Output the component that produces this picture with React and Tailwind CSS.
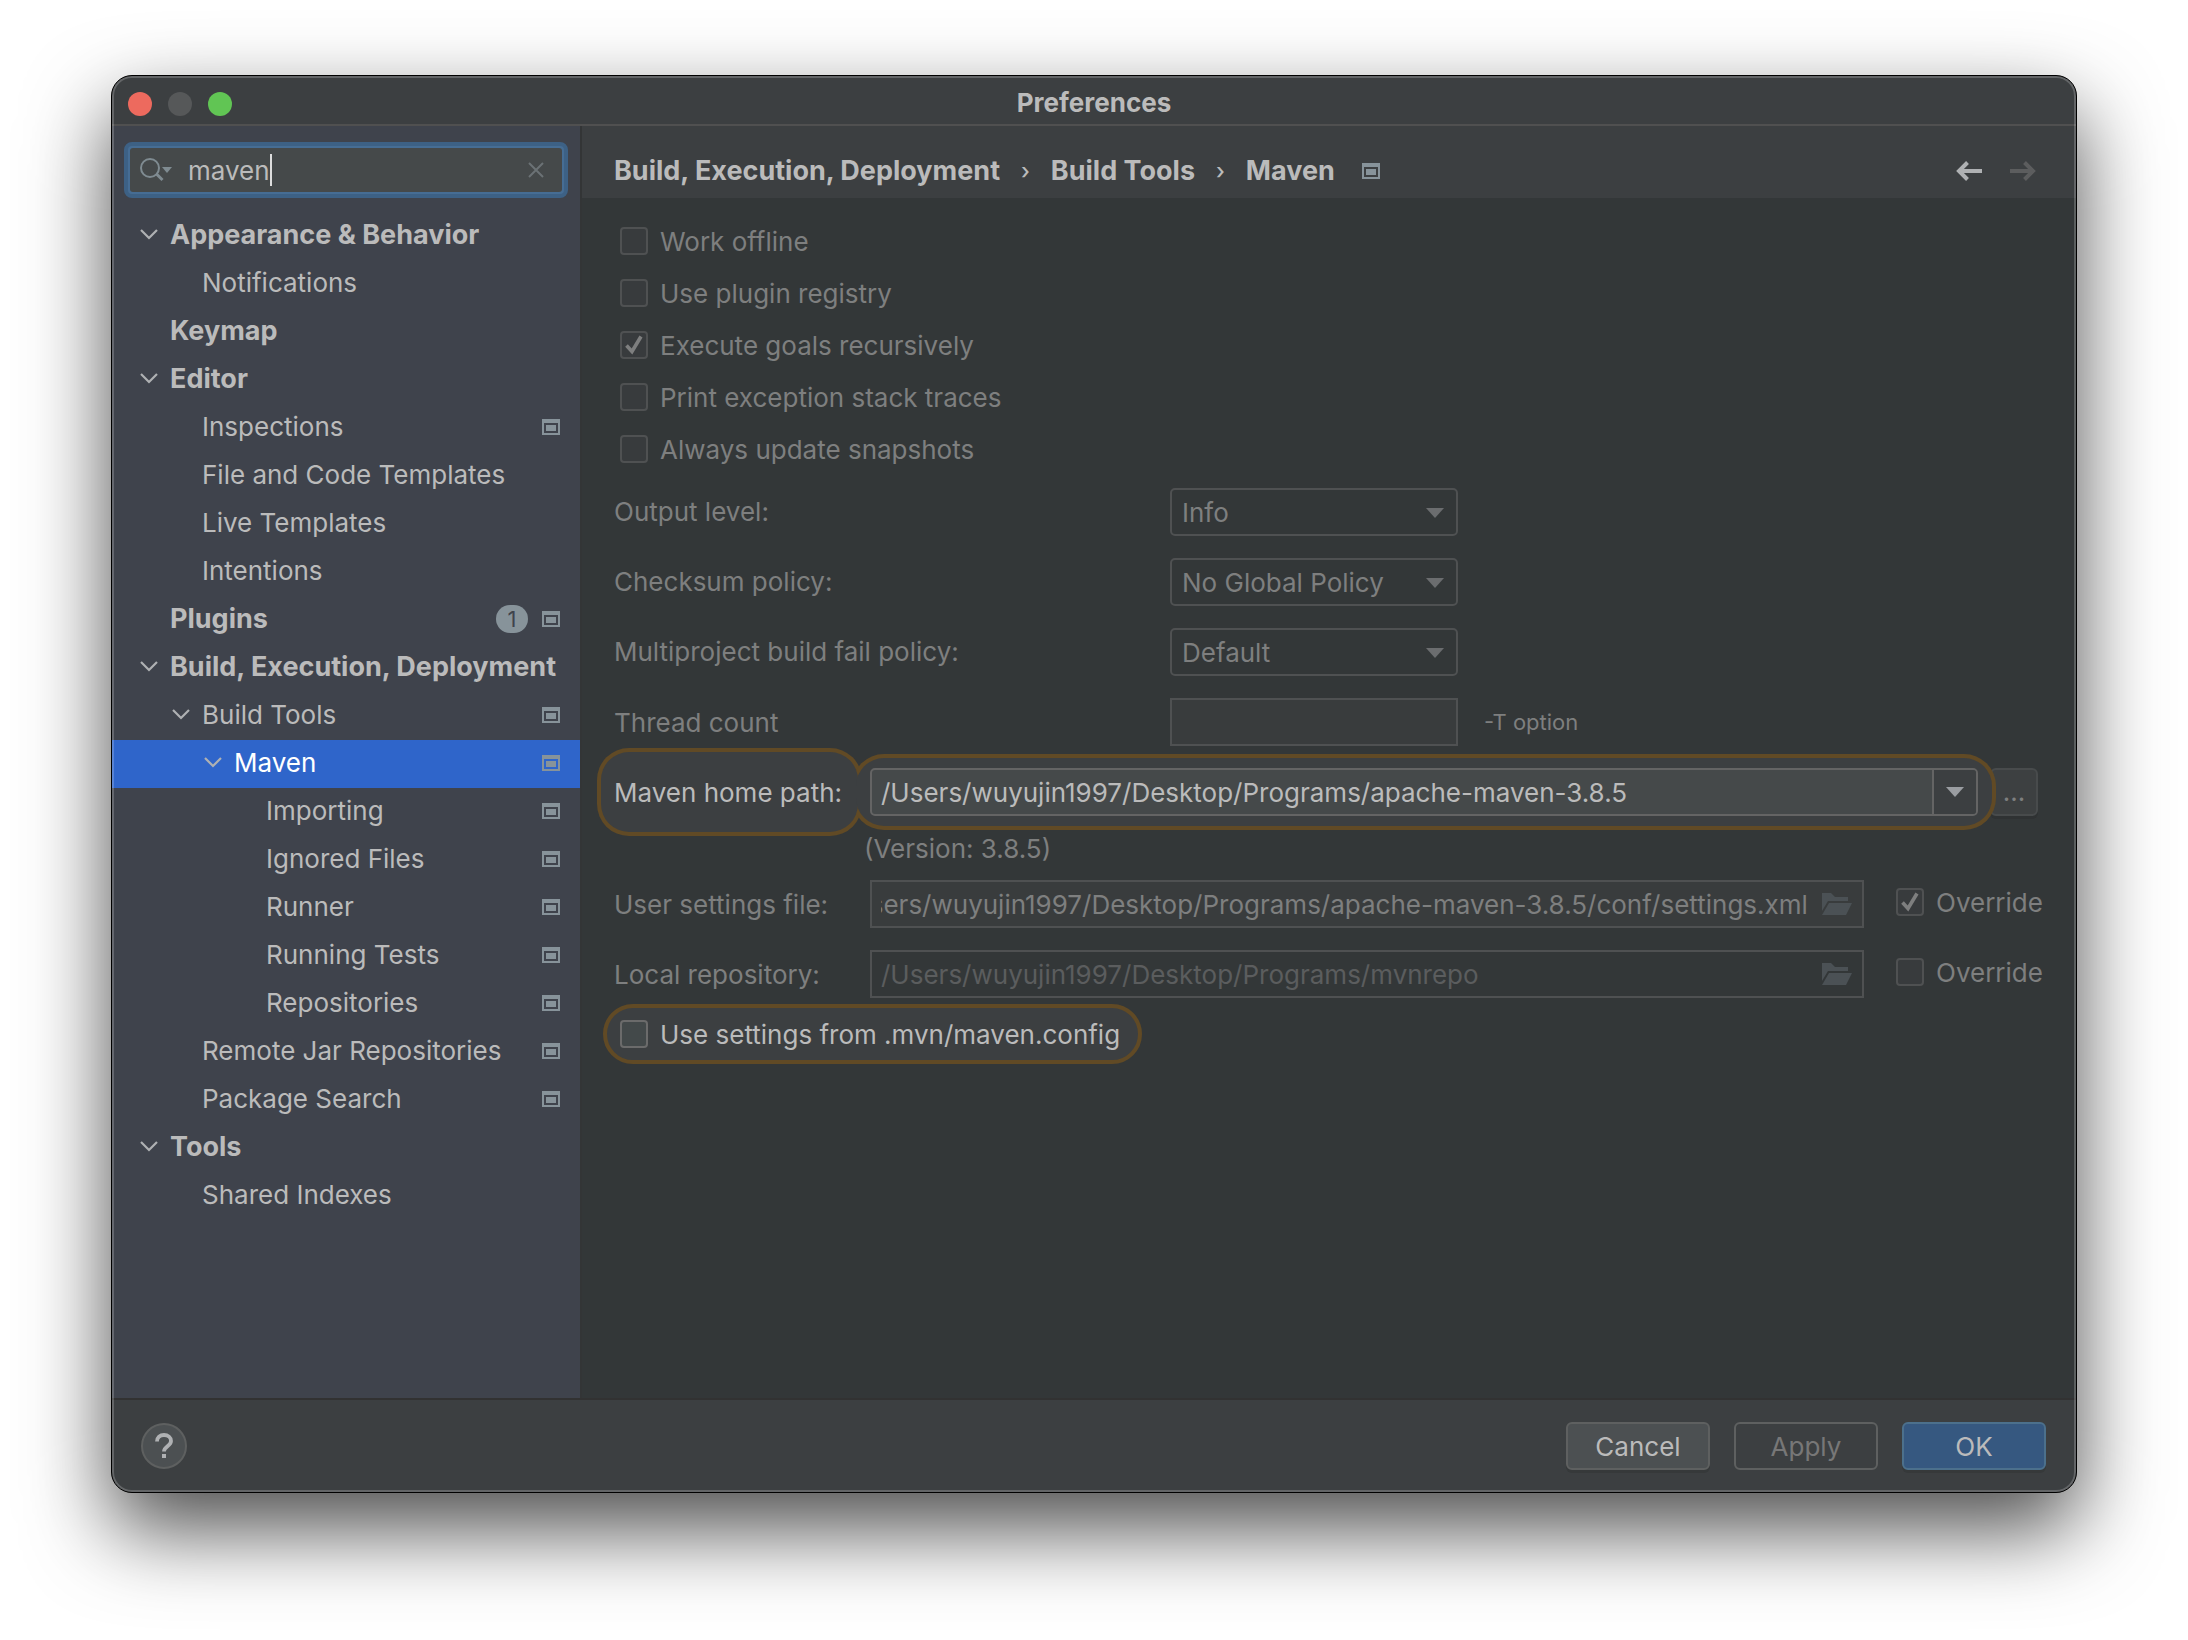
import { useEffect, useRef } from "react";

const TREE = [
  { label: "Appearance & Behavior", level: 0, bold: true, open: true },
  { label: "Notifications", level: 1 },
  { label: "Keymap", level: 0, bold: true },
  { label: "Editor", level: 0, bold: true, open: true },
  { label: "Inspections", level: 1, project: true },
  { label: "File and Code Templates", level: 1 },
  { label: "Live Templates", level: 1 },
  { label: "Intentions", level: 1 },
  { label: "Plugins", level: 0, bold: true, badge: 1, project: true },
  { label: "Build, Execution, Deployment", level: 0, bold: true, open: true },
  { label: "Build Tools", level: 1, open: true, project: true },
  { label: "Maven", level: 2, open: true, project: true, selected: true },
  { label: "Importing", level: 3, project: true },
  { label: "Ignored Files", level: 3, project: true },
  { label: "Runner", level: 3, project: true },
  { label: "Running Tests", level: 3, project: true },
  { label: "Repositories", level: 3, project: true },
  { label: "Remote Jar Repositories", level: 1, project: true },
  { label: "Package Search", level: 1, project: true },
  { label: "Tools", level: 0, bold: true, open: true },
  { label: "Shared Indexes", level: 1 },
];

const INDENT = ["pl-[26px]", "pl-[58px]", "pl-[90px]", "pl-[122px]"];

const OPTIONS = [
  { id: "offline", label: "Work offline" },
  { id: "registry", label: "Use plugin registry" },
  { id: "recursive", label: "Execute goals recursively", checked: true },
  { id: "traces", label: "Print exception stack traces" },
  { id: "snapshots", label: "Always update snapshots" },
];

const SELECTS = [
  { id: "output", label: "Output level:", value: "Info" },
  { id: "checksum", label: "Checksum policy:", value: "No Global Policy" },
  { id: "fail", label: "Multiproject build fail policy:", value: "Default" },
];

function ProjectIcon() {
  return (
    <svg width="18" height="16" viewBox="0 0 18 16" className="shrink-0" fill="#87939a">
      <path fillRule="evenodd" d="M0 0h18v16H0zM2 4v10h14V4z" />
      <path d="M4 6h10v6H4z" />
    </svg>
  );
}

function Chevron() {
  return (
    <svg width="22" height="14" viewBox="0 0 22 14" fill="none" stroke="#afb1b3" strokeWidth="2.2">
      <path d="M3 2l8 8 8-8" />
    </svg>
  );
}

function Triangle({ className }) {
  return (
    <svg width="18" height="10" viewBox="0 0 18 10" fill="currentColor" className={className}>
      <path d="M0 0h18L9 10z" />
    </svg>
  );
}

function FolderIcon() {
  return (
    <svg width="30" height="22" viewBox="0 0 30 22" className="shrink-0" fill="#4b5155">
      <path d="M0 0h9l4 4h13v4H6L0 18z" />
      <path d="M7 10h23l-6 12H0z" />
    </svg>
  );
}

function Checkbox({ id, checked, active }) {
  return (
    <span className="relative flex size-7 shrink-0">
      <input
        id={id}
        type="checkbox"
        defaultChecked={checked}
        disabled={!active}
        className={`size-7 appearance-none rounded-[4px] border-2 ${
          active ? "border-[#6b6b6b] bg-[#43494a]" : "border-[#4f5152] bg-[#383b3d]"
        }`}
      />
      {checked && (
        <svg
          viewBox="0 0 28 28"
          className="pointer-events-none absolute inset-0"
          fill="none"
          stroke="#7e7f7f"
          strokeWidth="3.6"
        >
          <path d="M6.5 14.5l5.5 6L21 5.500" />
        </svg>
      )}
    </span>
  );
}

function TreeRow({ item }) {
  return (
    <li>
      <a
        href="#"
        className={`flex h-12 items-center pr-5 pb-0.5 ${INDENT[item.level]} ${
          item.selected ? "bg-[#2f65ca] text-white" : ""
        } ${item.bold ? "text-[27px] font-bold" : ""}`}
      >
        <span className="mr-2.5 w-[22px] shrink-0">{item.open && <Chevron />}</span>
        <span className="flex-1 whitespace-nowrap">{item.label}</span>
        {item.badge && (
          <span className="mr-3.5 flex h-7 w-8 shrink-0 items-center justify-center rounded-full bg-[#87939a] text-[22px] font-normal text-[#3f434c]">
            {item.badge}
          </span>
        )}
        {item.project && <ProjectIcon />}
      </a>
    </li>
  );
}

function Sidebar() {
  return (
    <aside className="flex w-[470px] shrink-0 flex-col border-r-2 border-[#333536] bg-[#3f434c] pt-4">
      <div className="mx-3 flex h-14 items-center rounded-lg border-4 border-[#3d6185] bg-[#466d94] p-0.5">
        <div className="flex h-full w-full items-center rounded-[3px] bg-[#45494a] pr-[18px] pl-2.5">
          <svg width="34" height="26" viewBox="0 0 34 26" fill="none" className="mr-3.5 shrink-0">
            <circle cx="10" cy="11" r="9" stroke="#7f8b91" strokeWidth="2" />
            <path d="M16.500 17l6 6" stroke="#7f8b91" strokeWidth="3" />
            <path d="M22 10h10l-5 6z" fill="#7f8b91" />
          </svg>
          <input
            aria-label="Search settings"
            defaultValue="maven"
            className="field-sizing-content bg-transparent pt-0.5 caret-transparent outline-none"
          />
          <span className="h-8 w-0.5 bg-[#dddddd]" />
          <button aria-label="Clear search" className="ml-auto">
            <svg width="16" height="16" viewBox="0 0 16 16" stroke="#6b7275" strokeWidth="2">
              <path d="M1 1l14 14M15 1L1 15" />
            </svg>
          </button>
        </div>
      </div>
      <ul className="mt-3.5">
        {TREE.map((item) => (
          <TreeRow key={item.label} item={item} />
        ))}
      </ul>
    </aside>
  );
}

function PageHeader() {
  return (
    <header className="flex h-[72px] items-center bg-[#3c3f41] pt-[18px] pr-10 pl-8">
      <nav className="flex items-center gap-[21px] text-[27px] font-bold whitespace-nowrap">
        <a href="#">Build, Execution, Deployment</a>
        <span className="text-[22px] font-medium">›</span>
        <a href="#">Build Tools</a>
        <span className="text-[22px] font-medium">›</span>
        <a href="#" className="mr-1.5">
          Maven
        </a>
        <ProjectIcon />
      </nav>
      <div className="ml-auto flex gap-7">
        <button aria-label="Back">
          <svg width="26" height="20" viewBox="0 0 26 20" fill="none" stroke="#afb1b3" strokeWidth="4">
            <path d="M26 10H3M11.500 1.500L3 10l8.500 8.500" />
          </svg>
        </button>
        <button aria-label="Forward" disabled>
          <svg width="26" height="20" viewBox="0 0 26 20" fill="none" stroke="#5c5d5e" strokeWidth="4">
            <path d="M0 10h23M14.500 1.500L23 10l-8.500 8.500" />
          </svg>
        </button>
      </div>
    </header>
  );
}

function PathRow({ id, label, value, override, dim }) {
  const ref = useRef(null);

  // keep the end of a long path in view
  useEffect(() => {
    ref.current.scrollLeft = ref.current.scrollWidth;
  }, []);

  return (
    <div className="flex h-12 items-center">
      <label htmlFor={id} className="w-64 shrink-0 pt-0.5">
        {label}
      </label>
      <div
        className={`flex h-12 min-w-0 flex-1 items-center border-2 border-[#4f5152] pr-2.5 pl-[9px] ${
          dim ? "" : "bg-[#393c3d]"
        }`}
      >
        <input
          ref={ref}
          id={id}
          defaultValue={value}
          disabled
          className={`mr-3.5 min-w-0 flex-1 bg-transparent pt-0.5 ${dim ? "text-[#5b5d5e]" : ""}`}
        />
        <FolderIcon />
      </div>
      <div className="mb-1 ml-8 flex w-[146px] shrink-0 items-center gap-3">
        <Checkbox id={`${id}-override`} checked={override} />
        <label htmlFor={`${id}-override`} className="pt-0.5">
          Override
        </label>
      </div>
    </div>
  );
}

function MavenHomeRow() {
  return (
    <div className="isolate mr-1 flex h-12 items-center">
      <div className="relative flex h-12 w-[231px] shrink-0 items-center">
        <div className="absolute -inset-x-[17px] -inset-y-5 rounded-[32px] bg-[#614a25]" />
        <div className="absolute -inset-x-[13px] -inset-y-4 z-10 rounded-[28px] bg-[#3c3f41]" />
        <label htmlFor="home" className="relative z-20 pt-0.5 whitespace-nowrap text-[#bbbbbb]">
          Maven home path:
        </label>
      </div>
      <div className="relative ml-[25px] flex min-w-0 flex-1">
        <div className="absolute -inset-x-[18px] -inset-y-3.5 z-[1] rounded-[32px] bg-[#614a25]" />
        <div className="absolute -inset-x-3.5 -inset-y-2.5 z-10 rounded-[28px] bg-[#3c3f41]" />
        <div className="relative z-20 flex h-12 flex-1 overflow-hidden rounded-[5px] border-2 border-[#646464] bg-[#45494a]">
          <input
            id="home"
            defaultValue="/Users/wuyujin1997/Desktop/Programs/apache-maven-3.8.5"
            className="min-w-0 flex-1 bg-transparent pt-0.5 pl-[9px] text-[#bbbbbb] outline-none"
          />
          <button
            aria-label="Show Maven homes"
            className="flex w-11 items-center justify-center border-l-2 border-[#646464] bg-[#3c3f41]"
          >
            <Triangle className="text-[#9a9da1]" />
          </button>
        </div>
      </div>
      <button
        disabled
        className="ml-3 h-12 w-12 shrink-0 rounded-md border-2 border-[#484b4c] bg-[#3d4041] shadow-[0_3px_0_#2f3233]"
      >
        ...
      </button>
    </div>
  );
}

function MavenForm() {
  return (
    <form className="flex-1 pt-[17px] pr-[34px] pl-8 text-[#7e7f7f]">
      {OPTIONS.map((o) => (
        <div key={o.id} className="flex h-13 items-center gap-3 pl-1.5">
          <Checkbox id={o.id} checked={o.checked} />
          <label htmlFor={o.id} className="pt-0.5">
            {o.label}
          </label>
        </div>
      ))}

      <div className="mt-[13px] flex flex-col gap-[22px]">
        {SELECTS.map((s) => (
          <div key={s.id} className="flex h-12 items-center">
            <label htmlFor={s.id} className="w-[556px]">
              {s.label}
            </label>
            <div className="relative">
              <select
                id={s.id}
                disabled
                className="h-12 w-72 appearance-none rounded-[5px] border-2 border-[#4f5152] bg-transparent pt-0.5 pl-2.5 opacity-100"
              >
                <option>{s.value}</option>
              </select>
              <Triangle className="pointer-events-none absolute top-5 right-3.5 text-[#6b6d6f]" />
            </div>
          </div>
        ))}
        <div className="flex h-12 items-center">
          <label htmlFor="threads" className="w-[556px] pt-0.5">
            Thread count
          </label>
          <input id="threads" disabled className="h-12 w-72 border-2 border-[#4f5152] bg-[#393c3d] px-2" />
          <span className="ml-[26px] text-[22px]">-T option</span>
        </div>
        <MavenHomeRow />
      </div>

      <p className="ml-[250px] flex h-16 items-center pt-0.5">(Version: 3.8.5)</p>

      <div className="flex flex-col gap-[22px]">
        <PathRow
          id="settings"
          label="User settings file:"
          value="/Users/wuyujin1997/Desktop/Programs/apache-maven-3.8.5/conf/settings.xml"
          override
        />
        <PathRow id="repo" label="Local repository:" value="/Users/wuyujin1997/Desktop/Programs/mvnrepo" dim />
      </div>

      <div className="mt-1.5 -ml-[11px] flex h-15 w-fit items-center gap-3 rounded-full border-4 border-[#614a25] bg-[#3c3f41] pr-[18px] pl-[13px] text-[#bbbbbb]">
        <Checkbox id="mvnconfig" active />
        <label htmlFor="mvnconfig" className="pt-0.5">
          Use settings from .mvn/maven.config
        </label>
      </div>
    </form>
  );
}

export default function App() {
  return (
    <div className="flex min-h-screen bg-white px-[111px] pt-[75px] pb-[147px] font-['Inter',sans-serif] text-[26px] leading-8 text-[#bbbbbb]">
      <div className="relative flex min-w-0 flex-1 flex-col overflow-hidden rounded-[21px] border border-black bg-[#3c3f41] shadow-[0_36px_84px_rgba(0,0,0,0.7)]">
        <div className="flex h-[50px] items-center border-b-2 border-[#505050] px-4">
          <div className="flex flex-1 gap-4 pt-2">
            <button aria-label="Close" className="size-6 rounded-full bg-[#ed6a5e]" />
            <button aria-label="Minimize" disabled className="size-6 rounded-full bg-[#565859]" />
            <button aria-label="Zoom" className="size-6 rounded-full bg-[#61c554]" />
          </div>
          <h1 className="pt-1.5 font-bold">Preferences</h1>
          <div className="flex-1" />
        </div>

        <div className="flex flex-1">
          <Sidebar />
          <main className="flex min-w-0 flex-1 flex-col bg-[#333738]">
            <PageHeader />
            <MavenForm />
          </main>
        </div>

        <footer className="flex h-[94px] items-center gap-6 border-t-2 border-[#323232] pr-[30px] pl-[29px]">
          <button
            aria-label="Help"
            className="mr-auto flex size-[46px] items-center justify-center rounded-full border-2 border-[#5e6060] bg-[#4c5052]"
          >
            <svg width="18" height="26" viewBox="0 0 18 26" fill="none">
              <path d="M2 8.500C2 4.500 5 2 9 2s7 2.500 7 6c0 5-7 5.500-7 10.500" stroke="#afb1b3" strokeWidth="3.800" />
              <path d="M7 21h4v4H7z" fill="#afb1b3" />
            </svg>
          </button>
          <button className="h-12 w-36 rounded-md border-2 border-[#5e6060] bg-[#4c5052] pt-0.5 shadow-[0_3px_0_#36393a]">
            Cancel
          </button>
          <button disabled className="h-12 w-36 rounded-md border-2 border-[#5e6060] pt-0.5 text-[#777777]">
            Apply
          </button>
          <button className="h-12 w-36 rounded-md border-2 border-[#4c708c] bg-[#365880] pt-0.5 shadow-[0_3px_0_#36393a]">
            OK
          </button>
        </footer>

        {/* light inner edge of the window */}
        <div className="pointer-events-none absolute inset-0 rounded-[20px] border-2 border-white/20" />
      </div>
    </div>
  );
}
